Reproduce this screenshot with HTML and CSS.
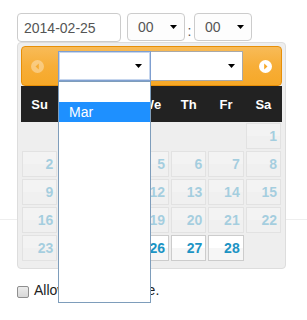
FILE: index.html
```html
<!DOCTYPE html>
<html>
<head>
<meta charset="utf-8">
<link rel="stylesheet" href="styles.css">
</head>
<body>
<div class="form">
  <div class="datetime">
    <input class="date-input" type="text" value="2014-02-25">
    <div class="select time"><span>00</span><svg class="caret" width="7" height="4" viewBox="0 0 7 4"><polygon points="0,0 7,0 3.5,4" fill="#000"/></svg></div>
    <span class="colon">:</span>
    <div class="select time"><span>00</span><svg class="caret" width="7" height="4" viewBox="0 0 7 4"><polygon points="0,0 7,0 3.5,4" fill="#000"/></svg></div>
  </div>
</div>
<hr class="rule">
<label class="check"><span class="box"></span><span>Allow any past date.</span></label>

<div class="datepicker">
  <div class="dp-header">
    <svg class="nav prev" width="13" height="13" viewBox="0 0 13 13"><circle cx="6.5" cy="6.5" r="6.5" fill="#fff"/><polygon points="7.8,3.5 7.8,9.5 4.5,6.5" fill="#f6a828"/></svg>
    <div class="select month focused"><span></span><svg class="caret" width="7" height="4" viewBox="0 0 7 4"><polygon points="0,0 7,0 3.5,4" fill="#000"/></svg></div>
    <div class="select year"><span></span><svg class="caret" width="7" height="4" viewBox="0 0 7 4"><polygon points="0,0 7,0 3.5,4" fill="#000"/></svg></div>
    <svg class="nav next" width="13" height="13" viewBox="0 0 13 13"><circle cx="6.5" cy="6.5" r="6.5" fill="#fff"/><polygon points="5.2,3.5 5.2,9.5 8.5,6.5" fill="#f6a828"/></svg>
  </div>
  <table class="cal">
    <thead>
      <tr><th>Su</th><th>Mo</th><th>Tu</th><th>We</th><th>Th</th><th>Fr</th><th>Sa</th></tr>
    </thead>
    <tbody>
      <tr><td></td><td></td><td></td><td></td><td></td><td></td><td><a class="day off">1</a></td></tr>
      <tr><td><a class="day off">2</a></td><td><a class="day off">3</a></td><td><a class="day off">4</a></td><td><a class="day off">5</a></td><td><a class="day off">6</a></td><td><a class="day off">7</a></td><td><a class="day off">8</a></td></tr>
      <tr><td><a class="day off">9</a></td><td><a class="day off">10</a></td><td><a class="day off">11</a></td><td><a class="day off">12</a></td><td><a class="day off">13</a></td><td><a class="day off">14</a></td><td><a class="day off">15</a></td></tr>
      <tr><td><a class="day off">16</a></td><td><a class="day off">17</a></td><td><a class="day off">18</a></td><td><a class="day off">19</a></td><td><a class="day off">20</a></td><td><a class="day off">21</a></td><td><a class="day off">22</a></td></tr>
      <tr><td><a class="day off">23</a></td><td><a class="day off">24</a></td><td><a class="day off">25</a></td><td><a class="day">26</a></td><td><a class="day">27</a></td><td><a class="day">28</a></td><td></td></tr>
    </tbody>
  </table>
</div>

<div class="month-list">
  <div class="opt"></div>
  <div class="opt selected">Mar</div>
</div>
</body>
</html>
```

FILE: styles.css
```css
* { box-sizing: border-box; }
html, body { margin: 0; padding: 0; }
body {
  position: relative;
  width: 307px;
  height: 320px;
  overflow: hidden;
  background: #fff;
  color: #333;
  font-family: "Liberation Sans", Arial, sans-serif;
  font-size: 14px;
}
.form { padding: 13px 0 0 17px; }
.datetime { display: flex; align-items: flex-start; }
.date-input {
  width: 104px;
  height: 29px;
  margin: 0;
  padding: 0 6px;
  border: 1px solid #ccc;
  border-radius: 4px;
  font: 14px "Liberation Sans", Arial, sans-serif;
  color: #555;
  background: #fff;
  outline: none;
}
.select {
  display: flex;
  align-items: center;
  justify-content: space-between;
  background: #fff;
  color: #555;
}
.select.time {
  width: 58px;
  height: 28px;
  margin-left: 6px;
  padding: 0 7px 0 10px;
  border: 1px solid #ccc;
  border-radius: 4px;
  background: #fdfdfd;
}
.caret { display: block; flex: none; }
.colon {
  width: 9px;
  margin: 10px 0 0 0;
  line-height: 16px;
  text-align: center;
  color: #555;
}
.select.time + .colon + .select.time { margin-left: 0; }

.rule {
  margin: 177px 0 0;
  border: 0;
  border-top: 1px solid #eee;
  height: 0;
}
.check {
  display: flex;
  align-items: flex-start;
  margin: 61px 0 0 17px;
  line-height: 18px;
  color: #222;
}
.box {
  width: 12px;
  height: 12px;
  margin: 5px 5px 0 0;
  border: 1px solid #8f8f8f;
  border-radius: 2px;
  background: linear-gradient(#ececec, #d8d8d8);
}

.datepicker {
  position: absolute;
  left: 17px;
  top: 42px;
  width: 269px;
  height: 227px;
  padding: 3px;
  border: 1px solid #ddd;
  border-radius: 4px;
  background: #eee;
}
.dp-header {
  display: flex;
  align-items: center;
  height: 40px;
  padding: 0 9px;
  border: 1px solid #e78f08;
  border-radius: 4px;
  background: linear-gradient(#f8bb58, #f7ae38 50%, #f6a828);
}
.nav { display: block; flex: none; }
.nav.prev { opacity: .35; margin-right: 14px; }
.nav.next { margin-left: 16px; }
.select.month, .select.year {
  height: 30px;
  padding: 0 7px 0 10px;
  border: 1px solid #a9a9a9;
}
.select.month { width: 93px; padding-right: 8px; }
.select.year { width: 92px; border-left: 0; }
.select.focused { border-color: #7f9fd0; box-shadow: inset 0 0 0 1px #c6d6ee; }

.cal {
  width: 261px;
  border-collapse: collapse;
  table-layout: fixed;
}
.cal th {
  height: 36px;
  padding: 0;
  background: #222;
  color: #fff;
  font-size: 13px;
  font-weight: bold;
  text-align: center;
}
.cal td { height: 28px; padding: 1px; }
.day {
  display: block;
  height: 26px;
  padding-right: 3px;
  border: 1px solid #ccc;
  background: linear-gradient(#fff 50%, #f6f6f6 50%);
  color: #1c94c4;
  font-size: 14px;
  font-weight: bold;
  line-height: 24px;
  text-align: right;
  text-decoration: none;
}
.day.off { opacity: .35; }

.month-list {
  position: absolute;
  left: 58px;
  top: 81px;
  width: 93px;
  height: 222px;
  border: 1px solid #7e9dbb;
  background: #fff;
}
.opt {
  height: 20px;
  padding-left: 10px;
  line-height: 20px;
  font-size: 14px;
  color: #000;
}
.opt.selected { background: #1e90ff; color: #fff; }
```
